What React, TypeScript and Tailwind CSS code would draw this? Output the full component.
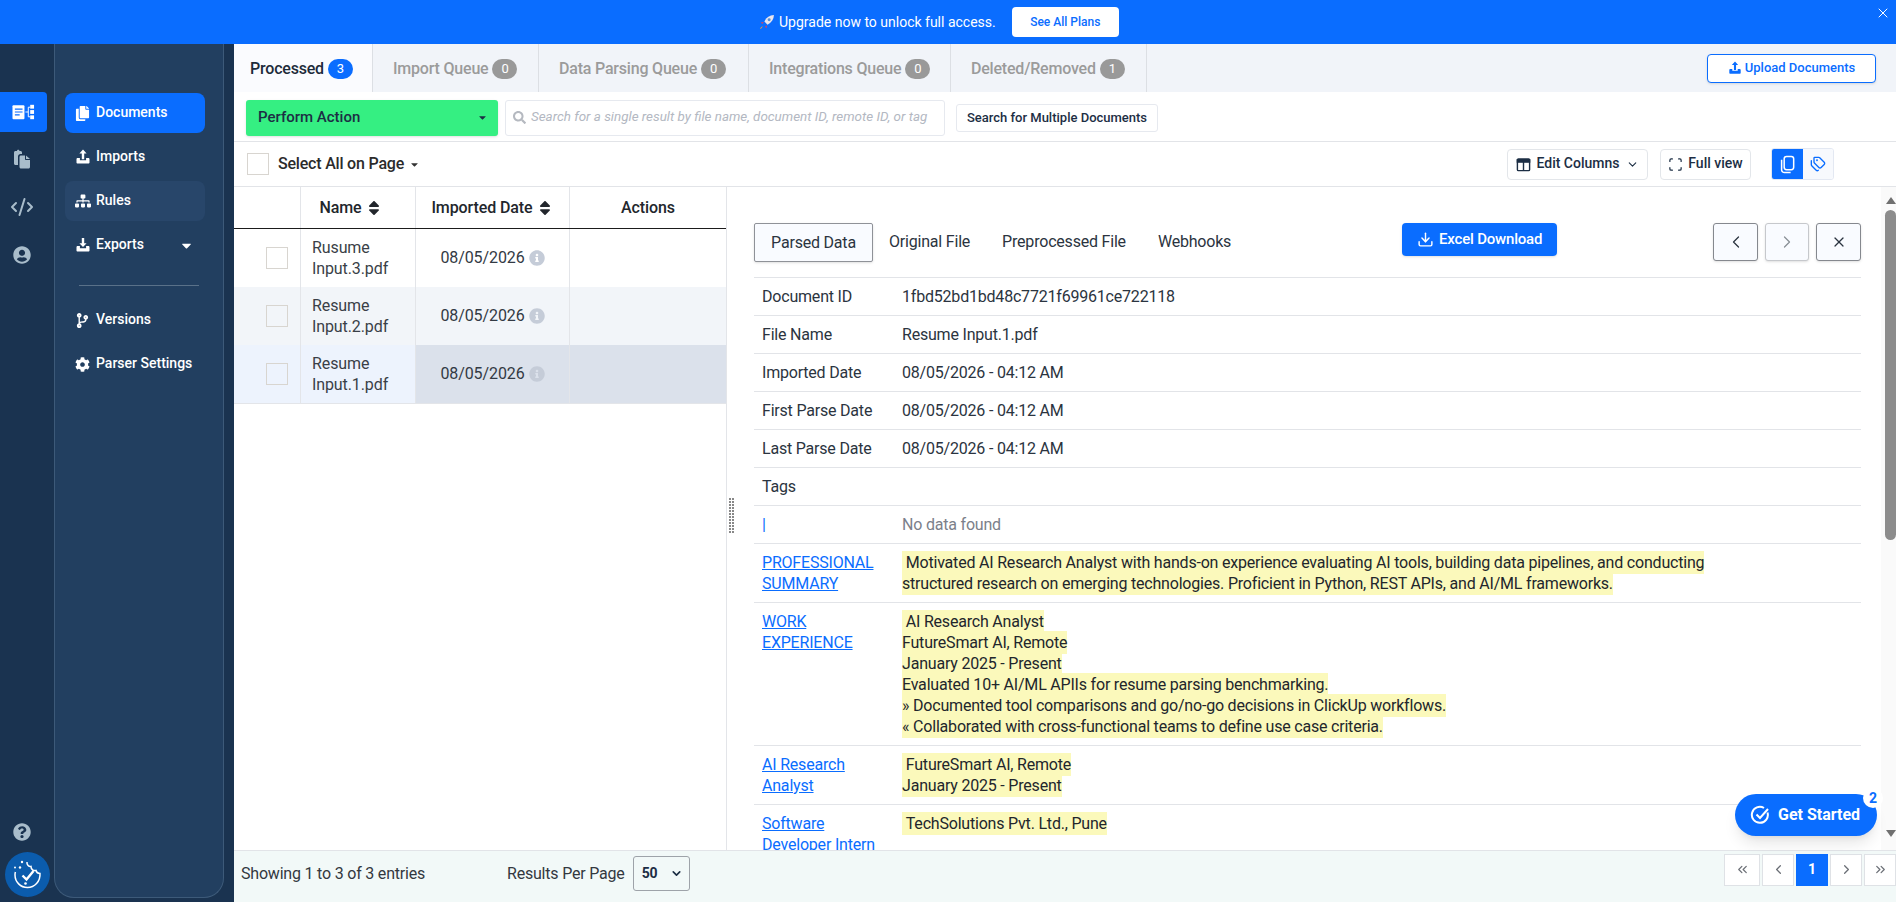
import React from "react";
import { FaCopy, FaSitemap, FaCodeBranch, FaCog, FaUserCircle, FaQuestionCircle, FaSort, FaInfoCircle, FaCaretDown, FaSearch } from "react-icons/fa";
import { ChevronDown, ChevronLeft, ChevronRight, ChevronsLeft, ChevronsRight, CodeXml, Tags, X, Scan, Download } from "lucide-react";

function Tray({ down, className }: { down?: boolean; className?: string }) {
  return (
    <svg viewBox="0 0 16 16" className={className} fill="currentColor">
      {down ? <path d="M6.800 1h2.400v5.200h2.400L8 10 4.400 6.200h2.400z" /> : <path d="M8 0.600l3.600 4H9.200v5.600H6.800V4.600H4.400z" />}
      <path d="M1.500 10.200c0-.7.500-1.200 1.200-1.200h2.200v2.200h6.200V9h2.200c.7 0 1.200.5 1.200 1.200v3.200c0 .7-.5 1.200-1.200 1.200H2.700c-.7 0-1.200-.5-1.200-1.200z" />
    </svg>
  );
}

function NavItem({ icon, label, active, hover, caret }: { icon: React.ReactNode; label: string; active?: boolean; hover?: boolean; caret?: boolean }) {
  return (
    <div className={`flex h-10 w-[140px] items-center rounded-[8px] pl-[10px] pr-[10px] text-[14px] font-medium text-white ${active ? "bg-[#0a6dff]" : hover ? "bg-[#28466a]" : ""}`}>
      <span className="flex w-[21px] shrink-0 items-center">{icon}</span>
      <span className="pb-[2px]">{label}</span>
      {caret && <FaCaretDown className="ml-auto mr-[1px] h-[15px] w-[15px]" />}
    </div>
  );
}

function Tab({ label, count, active, w }: { label: string; count: number; active?: boolean; w: string }) {
  return (
    <div className={`flex h-full items-center border-r border-[#dcdfe4] pt-[2px] text-[16px] font-medium tracking-[-0.2px] ${w} ${active ? "bg-[#fafbfe] pl-[16px] text-[#1d2b3a]" : "pl-[20px] text-[#9b9b9b]"}`}>
      <span>{label}</span>
      <span className={`ml-[4px] flex h-[20px] w-[25px] items-center justify-center rounded-full text-[13px] font-normal text-white ${active ? "bg-[#0a6dff]" : "bg-[#999999]"}`}>{count}</span>
    </div>
  );
}

function TableRow({ name, bg, restBg }: { name: [string, string]; bg: string; restBg?: string }) {
  return (
    <div className={`flex h-[58px] tracking-[-0.1px] ${bg}`}>
      <div className="flex w-[67px] items-center justify-end border-r border-[#e3e5e9] pr-[12px]">
        <span className="h-[22px] w-[22px] border border-[#d8d5d0] bg-transparent" />
      </div>
      <div className="flex w-[115px] flex-col justify-center border-r border-[#e3e5e9] pl-[11px] text-[16px] leading-[21px] text-[#3a3f47]">
        <span>{name[0]}</span>
        <span>{name[1]}</span>
      </div>
      <div className={`flex w-[154px] items-center justify-center border-r border-[#e3e5e9] text-[16px] text-[#333a44] ${restBg ?? ""}`}>
        <span>08/05/2026</span>
        <FaInfoCircle className="ml-[4px] h-[16px] w-[16px] text-[#c5ccd8]" />
      </div>
      <div className={`flex-1 ${restBg ?? ""}`} />
    </div>
  );
}

function DetailRow({ label, link, muted, children }: { label: React.ReactNode; link?: boolean; muted?: boolean; children?: React.ReactNode }) {
  return (
    <div className="flex border-b border-[#e2e4e8] py-[8px] text-[16px] leading-[21px] tracking-[-0.2px]">
      <div className={`w-[148px] shrink-0 pl-[8px] ${link ? "text-[#0a6dff] underline" : "text-[#2b3440]"}`}>{label}</div>
      <div className={muted ? "text-[#7b808a]" : "text-[#2b3440]"}>{children}</div>
    </div>
  );
}

function Mark({ children }: { children: React.ReactNode }) {
  return <span className="bg-[#fbf9bb] py-[2px] text-[#22262c]">{children}</span>;
}

function PageBtn({ children, active, w }: { children: React.ReactNode; active?: boolean; w: string }) {
  return (
    <div className={`flex h-[32px] items-center justify-center border text-[14px] font-bold ${w} ${active ? "border-[#0a6dff] bg-[#0a6dff] text-white" : "border-[#dfe2e6] bg-white text-[#6b6f76]"}`}>
      {children}
    </div>
  );
}

export default function App() {
  return (
    <div className="relative flex h-[902px] w-[1896px] flex-col overflow-hidden bg-white [font-family:Roboto,sans-serif]">
      <div className="relative flex h-[44px] shrink-0 items-center bg-[#0a6dff] pl-[758px] text-white">
        <svg viewBox="0 0 16 16" className="mr-[4px] h-[17px] w-[17px]">
          <path d="M15 1c-4 .2-7 2-9 6l3 3c4-2 5.800-5 6-9z" fill="#e9e6ee" />
          <circle cx="10.500" cy="5.500" r="1.400" fill="#5b8fd0" />
          <path d="M5.500 7.500L2.500 8l1.500 1.500zM8.500 10.500L8 13.500 6.500 12z" fill="#d9435c" />
          <path d="M4.500 11.500C3 12 2 13.500 2 14c.5 0 2-1 2.500-2.500z" fill="#f59a3c" />
        </svg>
        <span className="text-[14px]">Upgrade now to unlock full access.</span>
        <div className="ml-[16px] flex h-[30px] w-[107px] items-center justify-center rounded-[4px] bg-white text-[12px] font-medium text-[#0a6dff]">See All Plans</div>
        <X className="absolute right-[5px] top-[5px] h-[16px] w-[16px]" strokeWidth={1.5} />
      </div>

      <div className="flex min-h-0 flex-1">
        <aside className="flex w-[234px] shrink-0 bg-[#1a3350]">
          <div className="flex w-[54px] shrink-0 flex-col items-start pb-[5px] pt-[48px]">
            <div className="flex h-[40px] w-[47px] items-center justify-center rounded-r-[4px] bg-[#0a6dff]">
              <svg viewBox="0 0 24 16" className="h-[16px] w-[23px] text-white" fill="currentColor">
                <rect x="0.500" y="1" width="12.500" height="14.500" rx="1" />
                <path d="M3 5h8M3 8h8M3 11h5" stroke="#0a6dff" strokeWidth="1.200" />
                <path d="M14 8h3M17 3v10M17 3h2M17 13h2" stroke="currentColor" strokeWidth="1" fill="none" />
                <rect x="19" y="0.500" width="4" height="4" />
                <rect x="19" y="6" width="4" height="4" />
                <rect x="19" y="11.500" width="4" height="4" />
              </svg>
            </div>
            <div className="mt-[7px] flex h-[40px] w-[44px] items-center justify-center">
              <svg viewBox="0 0 20 20" className="h-[20px] w-[20px] text-[#a9bdcb]" fill="currentColor">
                <path d="M2 3.500C2 2.700 2.700 2 3.500 2H5c0-.8.600-1.200 1.200-1.200S7.500 1.200 7.500 2h1c.8 0 1.500.7 1.500 1.500V5H8.500C7.100 5 6 6.100 6 7.500V16H3.500C2.700 16 2 15.300 2 14.500z" />
                <path d="M7.500 8c0-.8.700-1.500 1.500-1.500h4V10c0 .6.400 1 1 1h4v7c0 .8-.7 1.500-1.500 1.500H9c-.8 0-1.500-.7-1.500-1.500z" />
                <path d="M14 6.500L18 10h-4z" />
              </svg>
            </div>
            <div className="mt-[8px] flex h-[40px] w-[44px] items-center justify-center">
              <CodeXml className="h-[24px] w-[24px] text-[#a9bdcb]" strokeWidth={2} />
            </div>
            <div className="mt-[8px] flex h-[40px] w-[44px] items-center justify-center">
              <FaUserCircle className="h-[18px] w-[18px] text-[#a9bdcb]" />
            </div>
            <div className="mt-auto flex w-[44px] justify-center pb-[11px]">
              <FaQuestionCircle className="h-[18px] w-[18px] text-[#a9bdcb]" />
            </div>
            <div className="ml-[5px] flex h-[45px] w-[45px] items-center justify-center rounded-full bg-[#0b5cad]">
              <svg viewBox="0 0 32 32" className="h-[32px] w-[32px] text-white" fill="none" stroke="currentColor" strokeWidth="1.500">
                <path d="M15 3c-.5 3 2 5 4 4.500 0 3 2.500 4.500 5 4 .5 2 2 3 4 3 .5 8-5.500 14-12.500 14C8.500 28.500 3 23 3 16c0-1 .1-2 .4-3" />
                <path d="M10.500 16.500l4 4 7-8.500" strokeWidth="2.400" />
                <circle cx="13.500" cy="24.500" r="1.300" fill="currentColor" stroke="none" />
                <circle cx="10" cy="3" r="1.200" fill="currentColor" stroke="none" />
                <circle cx="3" cy="8.500" r="1" fill="currentColor" stroke="none" />
                <circle cx="8" cy="8.500" r="1.200" fill="currentColor" stroke="none" />
              </svg>
            </div>
          </div>
          <nav className="mb-[4px] flex w-[170px] shrink-0 flex-col items-start rounded-b-[20px] border-x border-b border-[#3d5a79] bg-[#223f60] pl-[10px] pt-[49px]">
            <div className="flex flex-col gap-[4px]">
              <NavItem active label="Documents" icon={<FaCopy className="h-[15px] w-[15px]" />} />
              <NavItem label="Imports" icon={<Tray className="h-[16px] w-[16px]" />} />
              <NavItem hover label="Rules" icon={<FaSitemap className="h-[16px] w-[16px]" />} />
              <NavItem caret label="Exports" icon={<Tray down className="h-[16px] w-[16px]" />} />
            </div>
            <div className="ml-[14px] mt-[20px] h-px w-[120px] bg-[#5a7189]" />
            <div className="mt-[14px] flex flex-col gap-[4px]">
              <NavItem label="Versions" icon={<FaCodeBranch className="h-[15px] w-[15px]" />} />
              <NavItem label="Parser Settings" icon={<FaCog className="h-[15px] w-[15px]" />} />
            </div>
          </nav>
        </aside>

        <main className="flex min-w-0 flex-1 flex-col">
          <div className="flex h-[48px] shrink-0 items-center bg-[#f1f4f9] pr-[20px]">
            <Tab active label="Processed" count={3} w="w-[139px]" />
            <Tab label="Import Queue" count={0} w="w-[166px]" />
            <Tab label="Data Parsing Queue" count={0} w="w-[210px]" />
            <Tab label="Integrations Queue" count={0} w="w-[202px]" />
            <Tab label="Deleted/Removed" count={1} w="w-[196px]" />
            <div className="ml-auto flex h-[29px] w-[169px] items-center justify-center rounded-[4px] border border-[#0a6dff] bg-white text-[13px] font-medium text-[#0a6dff] shadow-sm">
              <Tray className="mr-[3px] h-[14px] w-[14px]" />
              Upload Documents
            </div>
          </div>

          <div className="flex h-[50px] shrink-0 items-center border-b border-[#e2e4e8] pl-[12px] pt-[2px]">
            <div className="flex h-[36px] w-[252px] items-center justify-between rounded-[3px] bg-[#35ef82] pl-[12px] pr-[10px] text-[15px] font-medium text-[#1c2e44] shadow">
              Perform Action
              <FaCaretDown className="h-[11px] w-[11px]" />
            </div>
            <div className="ml-[7px] flex h-[36px] w-[440px] items-center rounded-[3px] border border-[#e6e9ef] pl-[7px]">
              <FaSearch className="mr-[5px] h-[13px] w-[13px] text-[#b5b9c0]" />
              <span className="whitespace-nowrap text-[13.4px] italic text-[#b3b8c2]">Search for a single result by file name, document ID, remote ID, or tag</span>
            </div>
            <div className="ml-[11px] flex h-[28px] w-[202px] items-center justify-center rounded-[3px] border border-[#e6e9ef] text-[13px] font-medium text-[#1c2e44]">Search for Multiple Documents</div>
          </div>

          <div className="flex h-[45px] shrink-0 items-center border-b border-[#e2e4e8] pl-[13px] pr-[62px]">
            <span className="h-[22px] w-[22px] border border-[#d8d5d0]" />
            <span className="ml-[9px] text-[16px] font-medium tracking-[-0.2px] text-[#2b2b2b]">Select All on Page</span>
            <FaCaretDown className="ml-[5px] h-[11px] w-[11px] text-[#333]" />
            <div className="ml-auto flex h-[31px] w-[141px] items-center justify-center rounded-[4px] border border-[#e3e6ea] pb-[2px] text-[14px] font-medium text-[#1c2e44]">
              <svg viewBox="0 0 16 16" className="mr-[5px] mt-[2px] h-[15px] w-[15px]" fill="none" stroke="currentColor" strokeWidth="1.500">
                <rect x="1.500" y="2" width="13" height="12.500" rx="1" />
                <path d="M1.500 2.800h13V5.500h-13z" fill="currentColor" />
                <path d="M8 5v9.500" />
              </svg>
              Edit Columns
              <ChevronDown className="ml-[6px] mt-[2px] h-[13px] w-[13px]" />
            </div>
            <div className="ml-[12px] flex h-[31px] w-[91px] items-center justify-center rounded-[4px] border border-[#e3e6ea] pb-[2px] text-[14px] font-medium text-[#1c2e44]">
              <Scan className="mr-[5px] mt-[2px] h-[15px] w-[15px]" />
              Full view
            </div>
            <div className="ml-[20px] flex h-[32px] w-[63px] overflow-hidden rounded-[3px] border border-[#e3e8f2]">
              <div className="flex w-[31px] items-center justify-center bg-[#0a6dff]">
                <svg viewBox="0 0 20 20" className="h-[19px] w-[19px] text-white" fill="none" stroke="currentColor" strokeWidth="1.600">
                  <rect x="6.500" y="1.500" width="10" height="14" rx="2.500" />
                  <path d="M3.800 5v10.500a3 3 0 0 0 3 3h6.500" />
                </svg>
              </div>
              <div className="flex flex-1 items-center justify-center bg-[#f7f9fd]">
                <Tags className="h-[16px] w-[16px] text-[#0a6dff]" />
              </div>
            </div>
          </div>

          <div className="relative flex min-h-0 flex-1">
            <section className="w-[493px] shrink-0 border-r border-[#e3e5e9]">
              <div className="flex h-[42px] border-b border-[#1b1b1b] text-[16px] font-medium tracking-[-0.1px] text-[#22262c]">
                <div className="w-[67px] border-r border-[#e3e5e9]" />
                <div className="flex w-[115px] items-center justify-center border-r border-[#e3e5e9] pr-[14px]">
                  Name <FaSort className="ml-[3px] h-[18px] w-[18px]" />
                </div>
                <div className="flex w-[154px] items-center justify-center border-r border-[#e3e5e9]">
                  Imported Date <FaSort className="ml-[3px] h-[18px] w-[18px]" />
                </div>
                <div className="flex flex-1 items-center justify-center">Actions</div>
              </div>
              <TableRow name={["Rusume", "Input.3.pdf"]} bg="bg-white" />
              <TableRow name={["Resume", "Input.2.pdf"]} bg="bg-[#f2f5f9]" />
              <div className="border-b border-[#e3e5e9]">
                <TableRow name={["Resume", "Input.1.pdf"]} bg="bg-[#edf3fd]" restBg="bg-[#dbe1eb]" />
              </div>
            </section>

            <div className="absolute left-[495px] top-[311px] grid grid-cols-2 gap-x-px gap-y-px">
              {Array.from({ length: 24 }).map((_, i) => (
                <span key={i} className="h-[2px] w-[2px] bg-[#888]" />
              ))}
            </div>

            <section className="flex min-w-0 flex-1">
              <div className="min-w-0 flex-1 overflow-hidden pl-[27px] pr-[20px] pt-[36px]">
                <div className="flex h-[55px] items-start border-b border-[#e2e4e8] text-[16px] tracking-[-0.2px] text-[#2b3440]">
                  <div className="flex h-[39px] w-[119px] items-center justify-center rounded-[2px] border border-[#8f9298] bg-[#f9fbff] shadow">Parsed Data</div>
                  <span className="ml-[16px] mt-[7px]">Original File</span>
                  <span className="ml-[32px] mt-[7px]">Preprocessed File</span>
                  <span className="ml-[32px] mt-[7px]">Webhooks</span>
                  <div className="ml-[171px] flex h-[33px] w-[155px] items-center justify-center rounded-[4px] bg-[#0a6dff] text-[15px] font-medium text-white shadow">
                    <Download className="mr-[5px] h-[17px] w-[17px]" />
                    Excel Download
                  </div>
                  <div className="ml-auto flex gap-[7px]">
                    <div className="flex h-[38px] w-[45px] items-center justify-center rounded-[3px] border border-[#85888e] bg-[#f9fbff] shadow"><ChevronLeft className="h-[20px] w-[20px]" strokeWidth={1.5} /></div>
                    <div className="flex h-[38px] w-[44px] items-center justify-center rounded-[3px] border border-[#c6c8cc] bg-[#f9fbff] text-[#8a8f96] shadow"><ChevronRight className="h-[20px] w-[20px]" strokeWidth={1.5} /></div>
                    <div className="flex h-[38px] w-[45px] items-center justify-center rounded-[3px] border border-[#85888e] bg-[#f9fbff] shadow"><X className="h-[16px] w-[16px]" strokeWidth={1.8} /></div>
                  </div>
                </div>
                <DetailRow label="Document ID">1fbd52bd1bd48c7721f69961ce722118</DetailRow>
                <DetailRow label="File Name">Resume Input.1.pdf</DetailRow>
                <DetailRow label="Imported Date">08/05/2026 - 04:12 AM</DetailRow>
                <DetailRow label="First Parse Date">08/05/2026 - 04:12 AM</DetailRow>
                <DetailRow label="Last Parse Date">08/05/2026 - 04:12 AM</DetailRow>
                <DetailRow label="Tags"> </DetailRow>
                <DetailRow link muted label="|">No data found</DetailRow>
                <DetailRow link label={<>PROFESSIONAL<br />SUMMARY</>}>
                  <Mark>&nbsp;Motivated AI Research Analyst with hands-on experience evaluating AI tools, building data pipelines, and conducting<br />structured research on emerging technologies. Proficient in Python, REST APIs, and AI/ML frameworks.</Mark>
                </DetailRow>
                <DetailRow link label={<>WORK<br />EXPERIENCE</>}>
                  <Mark>&nbsp;AI Research Analyst<br />FutureSmart AI, Remote<br />January 2025 - Present<br />Evaluated 10+ AI/ML APIIs for resume parsing benchmarking.<br />» Documented tool comparisons and go/no-go decisions in ClickUp workflows.<br />« Collaborated with cross-functional teams to define use case criteria.</Mark>
                </DetailRow>
                <DetailRow link label={<>AI Research<br />Analyst</>}>
                  <Mark>&nbsp;FutureSmart AI, Remote<br />January 2025 - Present</Mark>
                </DetailRow>
                <DetailRow link label={<>Software<br />Developer Intern</>}>
                  <Mark>&nbsp;TechSolutions Pvt. Ltd., Pune</Mark>
                </DetailRow>
              </div>
              <div className="flex w-[15px] shrink-0 flex-col items-end bg-[#fafafa]">
                <div className="flex h-[23px] w-[11px] items-end justify-center pb-[6px]">
                  <span className="h-0 w-0 border-x-[5px] border-b-[7px] border-x-transparent border-b-[#707070]" />
                </div>
                <div className="h-[330px] w-[11px] rounded-full bg-[#8c8c8c]" />
                <div className="mb-[2px] mt-auto flex h-[20px] w-[11px] items-start justify-center pt-[2px]">
                  <span className="h-0 w-0 border-x-[5px] border-t-[7px] border-x-transparent border-t-[#707070]" />
                </div>
              </div>
            </section>
          </div>

          <footer className="flex h-[52px] shrink-0 items-center border-t border-[#e2e4e8] bg-[#f2f9f8] pb-[6px] pl-[7px] text-[16px] tracking-[-0.2px] text-[#33383f]">
            <span className="w-[266px]">Showing 1 to 3 of 3 entries</span>
            <span>Results Per Page</span>
            <div className="ml-[8px] flex h-[35px] w-[57px] items-center justify-between rounded-[3px] border border-[#9ea3a9] pl-[8px] pr-[6px] text-[14px] font-bold text-[#1c2e44]">
              50
              <ChevronDown className="h-[13px] w-[13px]" strokeWidth={3} />
            </div>
            <div className="-mt-[8px] ml-auto flex gap-[2px]">
              <PageBtn w="w-[36px]"><ChevronsLeft className="h-[15px] w-[15px]" /></PageBtn>
              <PageBtn w="w-[32px]"><ChevronLeft className="h-[15px] w-[15px]" /></PageBtn>
              <PageBtn active w="w-[32px]">1</PageBtn>
              <PageBtn w="w-[32px]"><ChevronRight className="h-[15px] w-[15px]" /></PageBtn>
              <PageBtn w="w-[32px]"><ChevronsRight className="h-[15px] w-[15px]" /></PageBtn>
            </div>
          </footer>
        </main>
      </div>

      <div className="absolute left-[1735px] top-[794px] flex h-[42px] w-[142px] items-center rounded-full bg-[#0a6dff] pl-[15px] text-[16px] font-bold text-white shadow-lg">
        <svg viewBox="0 0 20 20" className="mr-[8px] h-[20px] w-[20px]" fill="none" stroke="currentColor" strokeWidth="2">
          <path d="M17.500 7.500A8 8 0 1 1 14 3" />
          <path d="M6.500 9.500l3.500 3.500 8-9" />
        </svg>
        Get Started
        <span className="absolute -right-[6px] -top-[6px] flex h-[20px] w-[20px] items-center justify-center rounded-full bg-white text-[14px] font-bold text-[#0a6dff]">2</span>
      </div>
    </div>
  );
}
